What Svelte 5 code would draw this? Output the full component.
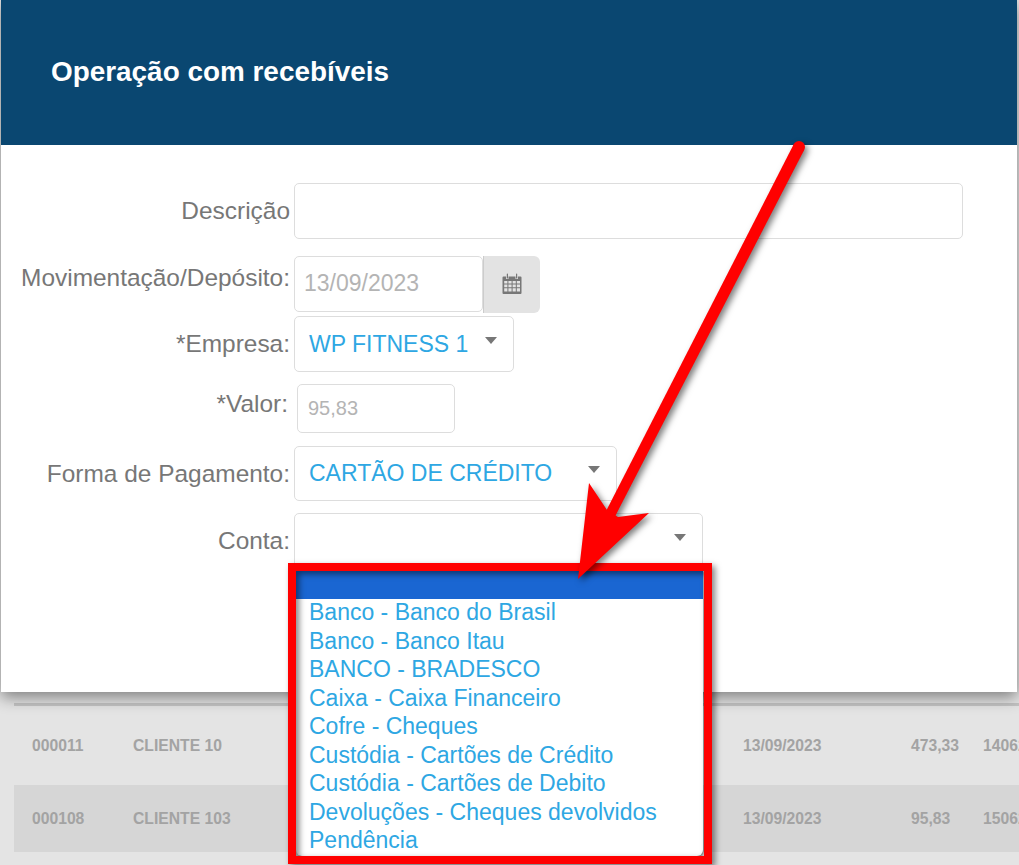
<script lang="ts">
  const contas = [
    'Banco - Banco do Brasil',
    'Banco - Banco Itau',
    'BANCO - BRADESCO',
    'Caixa - Caixa Financeiro',
    'Cofre - Cheques',
    'Custódia - Cartões de Crédito',
    'Custódia - Cartões de Debito',
    'Devoluções - Cheques devolvidos',
    'Pendência'
  ];

  const linhas = [
    { cod: '000011', cliente: 'CLIENTE 10', data: '13/09/2023', valor: '473,33', doc: '140620' },
    { cod: '000108', cliente: 'CLIENTE 103', data: '13/09/2023', valor: '95,83', doc: '150620' }
  ];
</script>

<div class="page">
  <section class="modal">
    <header class="modal-head">
      <h1>Operação com recebíveis</h1>
    </header>

    <div class="modal-body">
      <div class="row r-desc">
        <span class="lbl">Descrição</span>
        <input class="field f-desc" type="text" readonly aria-label="Descrição" />
      </div>

      <div class="row r-mov">
        <span class="lbl up">Movimentação/Depósito:</span>
        <div class="date-group">
          <input class="field f-date" type="text" readonly value="13/09/2023" aria-label="Movimentação" />
          <span class="addon">
            <svg width="20" height="22" viewBox="0 0 20 22" aria-hidden="true">
              <path fill="#777" d="M1.5 3.5h2.6V6h2.4V3.5h7V6h2.4V3.5h2.6a1 1 0 0 1 1 1V20a1 1 0 0 1-1 1h-17a1 1 0 0 1-1-1V4.500a1 1 0 0 1 1-1z" />
              <path fill="#e3e3e3" d="M2.200 8h3.200v2.600H2.200zM6.400 8h3.200v2.600H6.400zM10.600 8h3.200v2.600h-3.200zM14.800 8H18v2.600h-3.200zM2.200 11.600h3.200v2.600H2.200zM6.400 11.600h3.200v2.600H6.400zM10.600 11.600h3.200v2.600h-3.200zM14.800 11.600H18v2.600h-3.200zM2.200 15.200h3.200v3.200H2.200zM6.400 15.200h3.200v3.200H6.400zM10.600 15.200h3.200v3.200h-3.200zM14.800 15.200H18v3.200h-3.200z" />
              <rect x="4.800" y="0.500" width="1.200" height="5" rx="0.600" fill="#777" />
              <rect x="14" y="0.500" width="1.200" height="5" rx="0.600" fill="#777" />
            </svg>
          </span>
        </div>
      </div>

      <div class="row r-emp">
        <span class="lbl">*Empresa:</span>
        <div class="select s-emp">
          <span>WP FITNESS 1</span>
          <i class="caret"></i>
        </div>
      </div>

      <div class="row r-val">
        <span class="lbl up-sm val-lbl">*Valor:</span>
        <input class="field f-val" type="text" readonly value="95,83" aria-label="Valor" />
      </div>

      <div class="row r-forma">
        <span class="lbl">Forma de Pagamento:</span>
        <div class="select s-forma">
          <span>CARTÃO DE CRÉDITO</span>
          <i class="caret"></i>
        </div>
      </div>

      <div class="row r-conta">
        <span class="lbl conta-lbl">Conta:</span>
        <div class="select s-conta">
          <span></span>
          <i class="caret"></i>
        </div>
      </div>
    </div>
  </section>

  <div class="grid-area">
    {#each linhas as l, i}
      <div class="tr" class:alt={i === 1}>
        <span>{l.cod}</span>
        <span>{l.cliente}</span>
        <span>{l.data}</span>
        <span>{l.valor}</span>
        <span>{l.doc}</span>
      </div>
    {/each}
  </div>

  <!-- lista aberta do select Conta -->
  <ul class="dropdown">
    <li class="selected">&nbsp;</li>
    {#each contas as c}
      <li>{c}</li>
    {/each}
  </ul>

  <!-- anotacao vermelha por cima da tela -->
  <svg class="markup" width="1019" height="865" viewBox="0 0 1019 865" aria-hidden="true">
    <rect class="shadowed" x="292" y="567" width="416" height="293" fill="none" stroke="#ff0000" stroke-width="8" />
    <g class="shadowed" fill="#ff0000">
      <circle cx="799" cy="147" r="6" />
      <polygon points="804.300,149.700 793.700,144.300 603.800,515.600 613,520.400" />
      <polygon points="578,579 589,483 607,510 618,517 649,513" />
    </g>
  </svg>
</div>

<style>
  :global(body) {
    margin: 0;
    background: #e4e4e4;
  }

  .page {
    position: relative;
    width: 1019px;
    height: 865px;
    overflow: hidden;
    font-family: "Liberation Sans", Arial, sans-serif;
    background: #e4e4e4;
  }

  /* modal */
  .modal {
    position: relative;
    z-index: 1;
    width: 1016px;
    height: 692px;
    margin-left: 1px;
    background: #fff;
    box-shadow: 0 5px 15px rgba(0, 0, 0, 0.45);
  }

  .modal-head {
    height: 145px;
    display: flex;
    align-items: center;
    padding: 0 0 2px 50px;
    box-sizing: border-box;
    background: #0a4771;
  }

  .modal-head h1 {
    margin: 0;
    font-size: 27.900px;
    font-weight: 700;
    color: #fff;
  }

  .modal-body {
    padding-top: 38px;
  }

  .row {
    display: flex;
    align-items: center;
  }

  .r-mov { margin-top: 17px; }
  .r-emp { margin-top: 3px; }
  .r-val { margin-top: 12px; }
  .r-forma { margin-top: 13px; }
  .r-conta { margin-top: 12px; }

  .lbl {
    flex: none;
    width: 289px;
    margin-right: 4px;
    text-align: right;
    font-size: 24.450px;
    color: #777;
    white-space: nowrap;
  }

  .lbl.up { padding-bottom: 14px; }
  .lbl.up-sm { padding-bottom: 9px; }
  .conta-lbl { padding-bottom: 2px; }
  .val-lbl { width: 287px; margin-right: 9px; }

  .field {
    box-sizing: border-box;
    border: 1px solid #ddd;
    border-radius: 5px;
    background: #fff;
    outline: none;
    font-family: inherit;
    color: #b4b4b4;
  }

  .f-desc {
    width: 669px;
    height: 56px;
  }

  .date-group {
    display: flex;
  }

  .f-date {
    width: 189px;
    height: 56px;
    padding: 0 0 2px 9px;
    font-size: 23px;
  }

  .addon {
    width: 57px;
    height: 57px;
    display: flex;
    align-items: center;
    justify-content: center;
    box-sizing: border-box;
    padding-bottom: 2px;
    background: #e3e3e3;
    border-left: 1px solid #ccc;
    border-radius: 0 6px 6px 0;
  }

  .f-val {
    width: 158px;
    height: 49px;
    padding: 0 0 0 10px;
    font-size: 20px;
  }

  .select {
    box-sizing: border-box;
    display: flex;
    justify-content: space-between;
    border: 1px solid #ddd;
    border-radius: 5px;
    background: #fff;
    padding-left: 14px;
    font-size: 23px;
    color: #2ea7e3;
    white-space: nowrap;
    align-items: center;
  }

  .s-emp { width: 220px; height: 56px; padding-right: 16px; }
  .s-forma { width: 323px; height: 55px; padding-right: 16px; }
  .s-conta { width: 409px; height: 57px; padding-right: 16px; }

  .caret {
    display: block;
    width: 0;
    height: 0;
    margin-bottom: 8px;
    border-left: 6.500px solid transparent;
    border-right: 6.500px solid transparent;
    border-top: 7px solid #777;
  }

  /* tabela atras do modal */
  .grid-area {
    margin: 11px 0 0 14px;
    border-top: 3px solid #c4c4c4;
  }

  .tr {
    display: grid;
    grid-template-columns: 101px 610px 168px 72px 80px;
    align-items: center;
    height: 79px;
    padding-left: 18px;
    font-size: 15.700px;
    font-weight: 700;
    color: #a3a3a3;
    white-space: nowrap;
  }

  .tr.alt {
    height: 67px;
    background: #d6d6d6;
  }

  /* dropdown */
  .dropdown {
    position: absolute;
    z-index: 2;
    left: 296px;
    top: 571px;
    width: 407px;
    height: 285px;
    box-sizing: border-box;
    margin: 0;
    padding: 0;
    list-style: none;
    overflow: hidden;
    background: #fff;
    border-radius: 0 0 6px 6px;
    box-shadow: 1px 1px 2px rgba(0, 0, 0, 0.45);
  }

  .dropdown li {
    height: 28.500px;
    line-height: 27px;
    padding-left: 13px;
    font-size: 23px;
    color: #2ea7e3;
    white-space: nowrap;
  }

  .dropdown li.selected {
    height: 28px;
    background: #1a66d2;
  }

  .markup {
    position: absolute;
    z-index: 3;
    left: 0;
    top: 0;
    pointer-events: none;
  }

  .shadowed {
    filter: drop-shadow(3px 3px 3px rgba(0, 0, 0, 0.5));
  }
</style>
